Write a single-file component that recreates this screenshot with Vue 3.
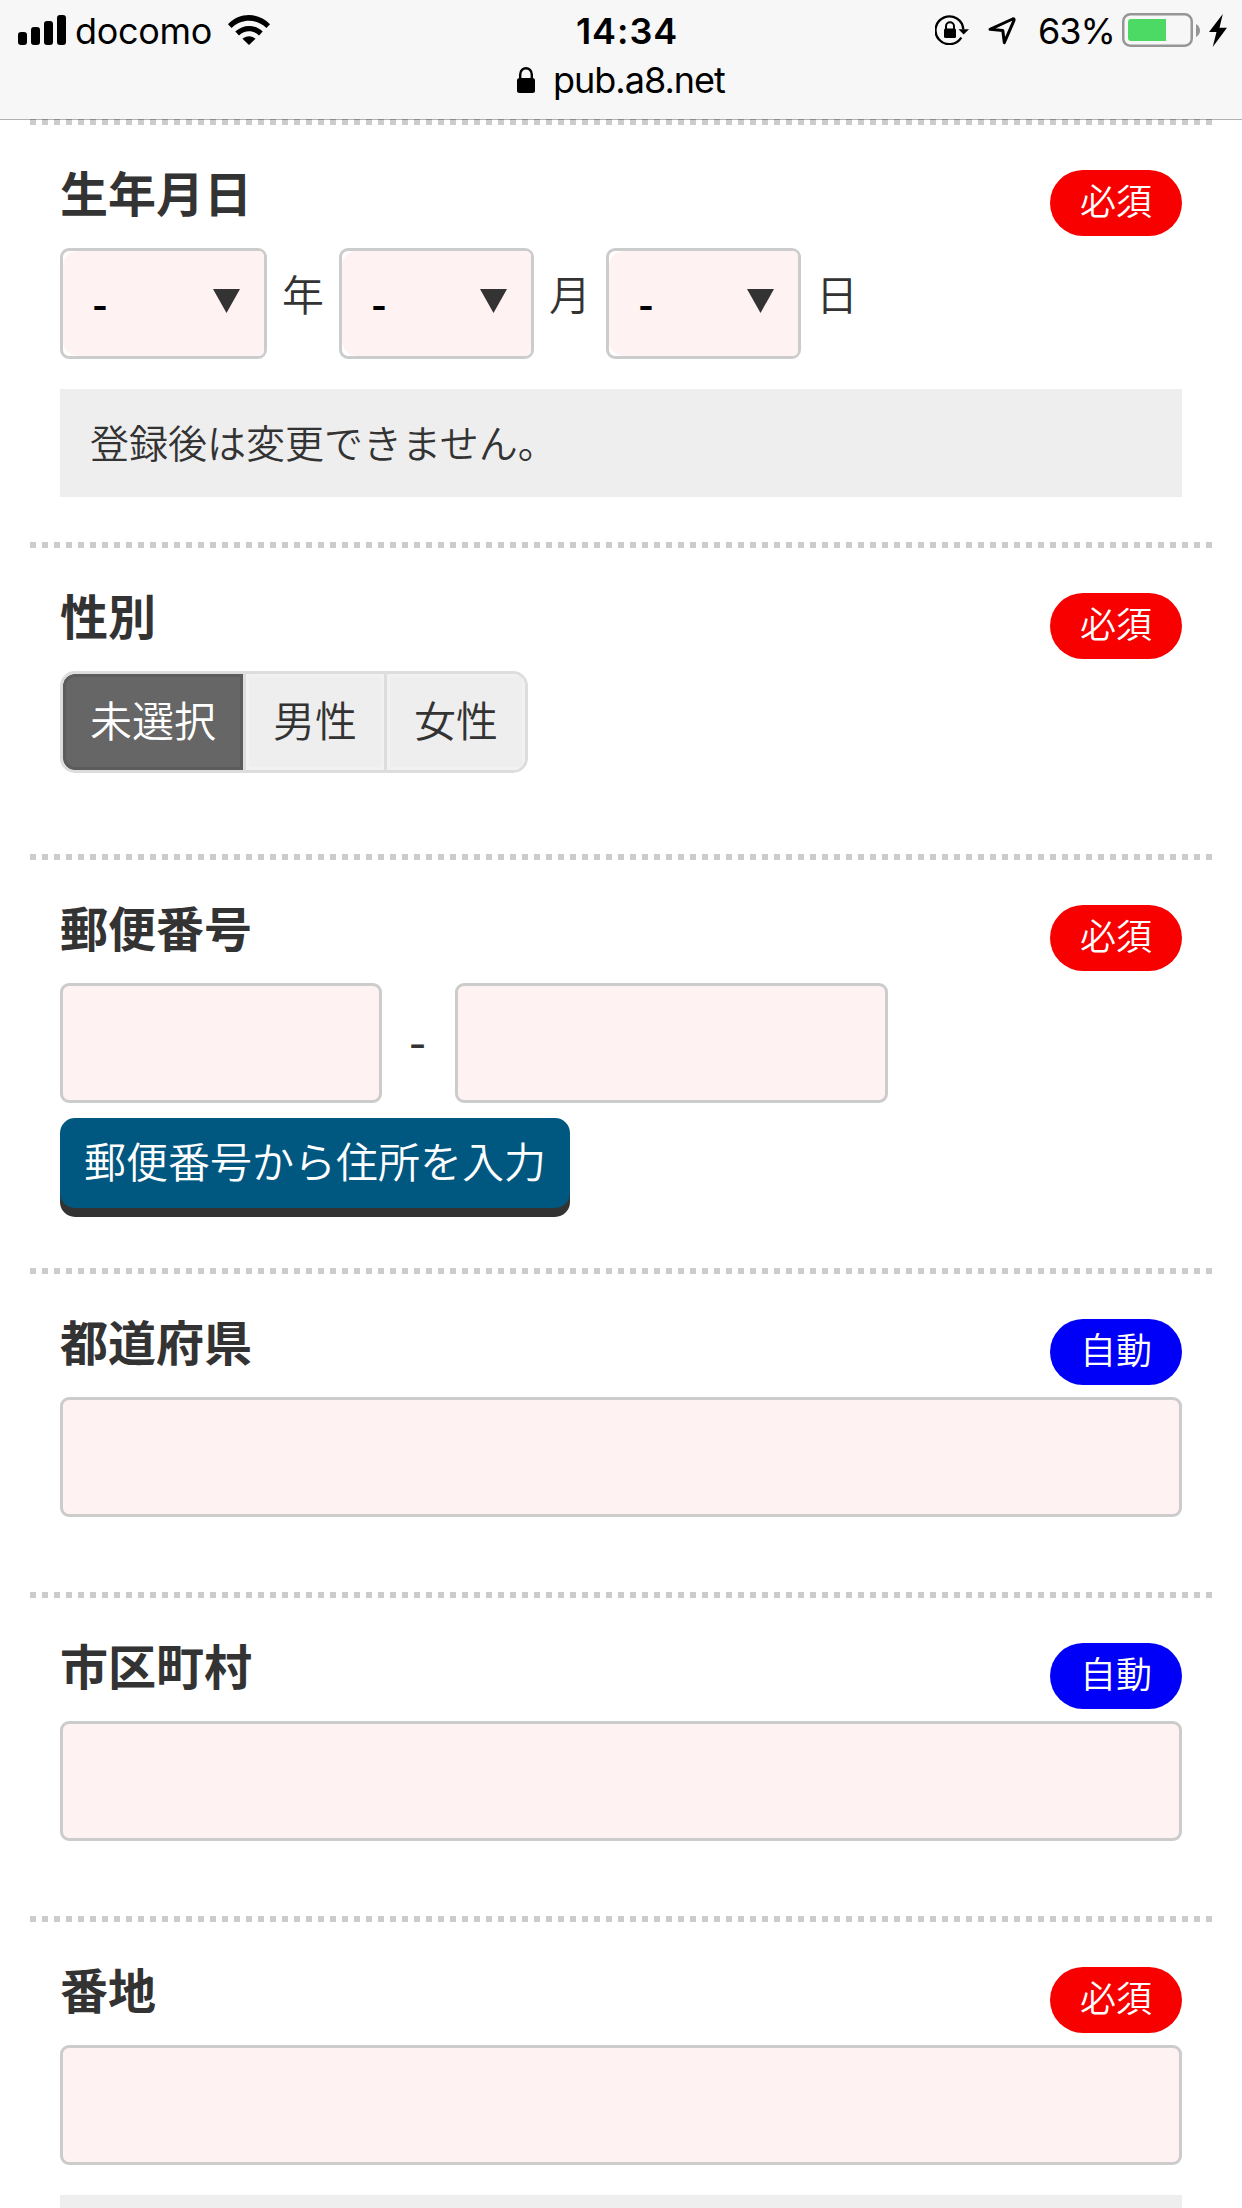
<script setup>
import { ref } from 'vue'

const dateParts = [
  { unit: '年', size: 'wide' },
  { unit: '月', size: '' },
  { unit: '日', size: '' },
]
const genders = ['未選択', '男性', '女性']
const gender = ref('未選択')
</script>

<template>
  <div class="screen">
    <header class="browser-bar">
      <div class="status">
        <div class="status-left">
          <svg class="signal" width="48" height="30" viewBox="0 0 48 30">
            <rect x="0" y="17" width="9" height="13" rx="3" />
            <rect x="13" y="12" width="9" height="18" rx="3" />
            <rect x="26" y="6" width="9" height="24" rx="3" />
            <rect x="39" y="0" width="9" height="30" rx="3" />
          </svg>
          <span class="carrier">docomo</span>
          <svg class="wifi" width="42" height="30" viewBox="0 0 42 30">
            <path d="M0 9.2C11.5-3 30.500-3 42 9.200L38.400 13C28.500 3.300 13.500 3.300 3.600 13Z" />
            <path d="M7.300 16.600C15 9 27 9 34.700 16.600L31 20.400C25 15 17 15 11 20.400Z" />
            <path d="M14.500 23.800C18 20.300 24 20.300 27.500 23.800L21 30Z" />
          </svg>
        </div>
        <span class="clock">14:34</span>
        <div class="status-right">
          <svg class="rotation" width="34" height="30" viewBox="0 0 34 30">
            <path d="M26.300 22.500A13.900 13.900 0 1 1 28.300 14.500" fill="none" stroke="#000" stroke-width="2.300" />
            <path d="M23.500 14.200H34L28.700 19.500Z" />
            <rect x="9" y="13.500" width="12" height="9.500" rx="1.500" />
            <path d="M11 14V11.300A4 4 0 0 1 19 11.300V14" fill="none" stroke="#000" stroke-width="2" />
          </svg>
          <svg class="location" width="28" height="28" viewBox="0 0 28 28">
            <path d="M2 12.300L24.600 2Q26.600 1.400 26 3.400L16.300 25.600L14.800 13.500Z" fill="none" stroke="#000" stroke-width="3" stroke-linejoin="round" />
          </svg>
          <span class="percent">63%</span>
          <svg class="battery" width="78" height="34" viewBox="0 0 78 34">
            <rect x="1.250" y="1.250" width="68.500" height="31.500" rx="7" fill="none" stroke="#969696" stroke-width="2.500" />
            <path d="M9 6H44V28H9Q6 28 6 25V9Q6 6 9 6Z" fill="#4cd964" />
            <path d="M74 11Q78 13.500 78 17.500Q78 21.500 74 24Z" fill="#969696" />
          </svg>
          <svg class="bolt" width="18" height="33" viewBox="0 0 18 33">
            <path d="M13.800 0L0 18H7.500L3.700 33L18 13.800H10.500Z" />
          </svg>
        </div>
      </div>
      <div class="address">
        <svg class="lock" width="18" height="26" viewBox="0 0 18 26">
          <rect x="0" y="11" width="18" height="15" rx="2.500" />
          <path d="M3.200 12V7.500C3.200 -.800 14.800 -.800 14.800 7.500V12" fill="none" stroke="#000" stroke-width="2.400" />
        </svg>
        <span class="host">pub.a8.net</span>
      </div>
    </header>

    <main class="form">
      <section class="field">
        <div class="head">
          <h2>生年月日</h2>
          <span class="badge required">必須</span>
        </div>
        <div class="date-row">
          <template v-for="part in dateParts" :key="part.unit">
            <div class="select" :class="part.size">
              <div class="select-body">
                <span class="select-value">-</span>
                <svg class="caret" width="27" height="24" viewBox="0 0 27 24">
                  <path d="M0 0H27L13.500 24Z" />
                </svg>
              </div>
            </div>
            <span class="unit">{{ part.unit }}</span>
          </template>
        </div>
        <p class="note">登録後は変更できません。</p>
      </section>

      <section class="field gender">
        <div class="head">
          <h2>性別</h2>
          <span class="badge required">必須</span>
        </div>
        <div class="segments">
          <button
            v-for="g in genders"
            :key="g"
            type="button"
            class="segment"
            :class="{ active: g === gender }"
            @click="gender = g"
          >{{ g }}</button>
        </div>
      </section>

      <section class="field postal">
        <div class="head">
          <h2>郵便番号</h2>
          <span class="badge required">必須</span>
        </div>
        <div class="postal-row">
          <input class="box first" type="text" />
          <span class="hyphen">-</span>
          <input class="box second" type="text" />
        </div>
        <button type="button" class="lookup">郵便番号から住所を入力</button>
      </section>

      <section class="field plain">
        <div class="head">
          <h2>都道府県</h2>
          <span class="badge auto">自動</span>
        </div>
        <input class="box" type="text" />
      </section>

      <section class="field plain">
        <div class="head">
          <h2>市区町村</h2>
          <span class="badge auto">自動</span>
        </div>
        <input class="box" type="text" />
      </section>

      <section class="field">
        <div class="head">
          <h2>番地</h2>
          <span class="badge required">必須</span>
        </div>
        <input class="box" type="text" />
        <p class="note"></p>
      </section>
    </main>
  </div>
</template>

<style>
body {
  margin: 0;
  background: #fff;
}
</style>

<style scoped>
* {
  box-sizing: border-box;
}

.screen {
  width: 1242px;
  height: 2208px;
  overflow: hidden;
  background: #fff;
  color: #333;
  font-family: "Noto Sans CJK JP", sans-serif;
  font-weight: 350;
}

svg {
  display: block;
  flex: none;
}

/* Browser chrome */
.browser-bar {
  position: relative;
  z-index: 1;
  height: 120px;
  border-bottom: 1px solid rgba(0, 0, 0, 0.3);
  background: #f7f7f7;
  background-clip: padding-box;
  color: #000;
  font-family: Inter, "Liberation Sans", sans-serif;
  font-weight: 400;
  white-space: nowrap;
}

.status {
  display: grid;
  grid-template-columns: 576px 99px 1fr;
  height: 62px;
  font-size: 36px;
  line-height: 62px;
}

.status-left,
.status-right {
  display: flex;
  align-items: flex-start;
}

.signal {
  margin: 15px 0 0 18px;
}

.carrier {
  width: 137px;
  margin-left: 9px;
  letter-spacing: -0.3px;
}

.wifi {
  margin: 15px 0 0 16px;
}

.clock {
  font-weight: 600;
  letter-spacing: 0.9px;
}

.rotation {
  margin: 15px 0 0 260px;
}

.location {
  margin: 17px 0 0 19px;
}

.percent {
  width: 74px;
  margin-left: 22px;
  letter-spacing: -1px;
}

.battery {
  margin: 13px 0 0 10px;
}

.bolt {
  margin: 14px 0 0 9px;
}

.address {
  display: flex;
  height: 57px;
  padding-left: 517px;
  font-size: 36px;
  line-height: 36px;
}

.lock {
  margin-top: 5px;
}

.host {
  margin-left: 18px;
  letter-spacing: -1px;
}

/* Form */
.form {
  margin-top: -1px;
  padding: 0 30px;
}

.field {
  padding: 48px 30px 45px;
  background: repeating-linear-gradient(90deg, #ccc 0 6px, transparent 6px 12px) 0 0 / 100% 6px no-repeat;
}

.head {
  display: flex;
  justify-content: space-between;
  align-items: flex-start;
  height: 81px;
}

h2 {
  margin: 0;
  font-size: 48px;
  font-weight: 700;
  line-height: 48px;
}

.badge {
  width: 132px;
  height: 66px;
  margin-top: 3px;
  border-radius: 33px;
  color: #fff;
  font-size: 36px;
  line-height: 58px;
  text-align: center;
}

.required {
  background: #f80000;
}

.auto {
  background: #0000f8;
}

.date-row {
  display: flex;
}

.select {
  width: 195px;
  height: 111px;
  border: 3px solid #ccc;
  border-radius: 9px;
}

.select.wide {
  width: 207px;
}

.select-body {
  display: flex;
  justify-content: space-between;
  height: 105px;
  padding: 0 24px 0 29px;
  border-radius: 15px 5px 5px 15px;
  background: #fef2f2;
}

.select-value {
  color: #000;
  font-family: Inter, sans-serif;
  font-size: 34px;
  font-weight: 700;
  line-height: 109px;
}

.caret {
  margin-top: 38px;
  fill: #333;
}

.unit {
  width: 72px;
  font-size: 42px;
  line-height: 89px;
  text-align: center;
}

.note {
  height: 108px;
  margin: 30px 0 0;
  padding-left: 30px;
  background: #eee;
  font-size: 39px;
  line-height: 104px;
}

.gender {
  padding-bottom: 81px;
}

.segments {
  display: flex;
  width: 468px;
  height: 102px;
  border: 3px solid #ddd;
  border-radius: 15px;
  overflow: hidden;
}

button {
  margin: 0;
  border: 0;
  font-family: inherit;
  font-weight: inherit;
  white-space: nowrap;
}

.segment {
  width: 138px;
  height: 96px;
  padding: 0 0 7px;
  background: #eee;
  box-shadow: inset 0 0 0 3px #f1f1f1;
  color: #333;
  font-size: 42px;
  line-height: 89px;
}

.segment + .segment {
  width: 141px;
  border-left: 3px solid #ddd;
}

.segment.active {
  width: 180px;
  border-radius: 12px 0 0 12px;
  background: #666;
  box-shadow: inset 0 0 0 3px #5c5c5c;
  color: #fff;
}

.postal {
  padding-bottom: 60px;
}

.postal-row {
  display: flex;
  height: 120px;
}

.box {
  display: block;
  width: 1122px;
  height: 120px;
  margin: 0;
  padding: 0 20px;
  border: 3px solid #ccc;
  border-radius: 9px;
  outline: 0;
  background: #fef2f2;
}

.box.first {
  width: 322px;
}

.box.second {
  width: 433px;
}

.hyphen {
  width: 73px;
  padding-right: 2px;
  font-family: Inter, sans-serif;
  font-size: 39px;
  font-weight: 500;
  line-height: 121px;
  text-align: center;
}

.lookup {
  display: block;
  width: 510px;
  height: 90px;
  margin-top: 15px;
  padding: 0 0 7px;
  border-radius: 15px;
  background: #005881;
  box-shadow: 0 9px 0 #333;
  color: #fff;
  font-size: 42px;
  line-height: 83px;
}

.plain {
  padding-bottom: 75px;
}
</style>
